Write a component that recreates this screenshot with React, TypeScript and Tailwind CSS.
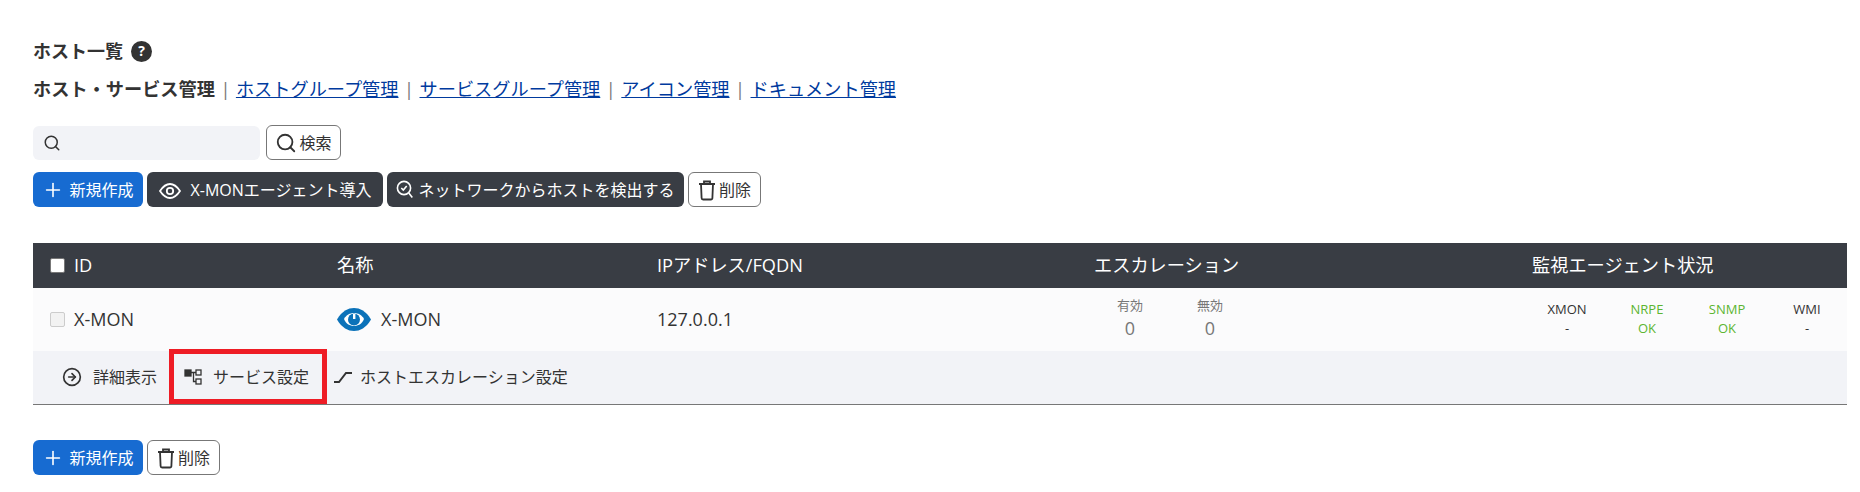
import React from 'react';
import { Search, Plus, CircleArrowRight } from 'lucide-react';

const fontStack = { fontFamily: '"Open Sans", "Noto Sans CJK JP", sans-serif' };

const links = ['ホストグループ管理', 'サービスグループ管理', 'アイコン管理', 'ドキュメント管理'];

const agents = [
  { name: 'XMON', value: '-', ok: false },
  { name: 'NRPE', value: 'OK', ok: true },
  { name: 'SNMP', value: 'OK', ok: true },
  { name: 'WMI', value: '-', ok: false },
];

const TrashIcon = () => (
  <svg width="18" height="22" viewBox="0 0 18 22" fill="none" stroke="#333" strokeWidth="1.8">
    <path d="M1 5h16M6 5V2.500h6V5M3 5l.6 14a1.500 1.500 0 0 0 1.500 1.500h7.800a1.500 1.500 0 0 0 1.500-1.500L15 5" />
  </svg>
);

const CreateButton = () => (
  <button className="h-[35px] w-[110px] rounded-md bg-[#176bd1] text-white text-base flex items-center justify-center gap-[5px]">
    <Plus size={22} strokeWidth={1.75} /> 新規作成
  </button>
);

const DeleteButton = () => (
  <button className="h-[35px] w-[73px] rounded-md border border-[#777] bg-white text-[#333] text-base flex items-center justify-center gap-[3px]">
    <TrashIcon /> 削除
  </button>
);

const AgentIcon = () => (
  <svg width="22" height="22" viewBox="0 0 22 22" fill="none" stroke="#fff" strokeWidth="1.8">
    <path d="M1 12C4 7.500 7.500 5 11 5s7 2.500 10 7c-3 4.500-6.500 7-10 7s-7-2.500-10-7Z" />
    <circle cx="11" cy="12" r="3.200" />
  </svg>
);

const DiscoverIcon = () => (
  <svg width="18" height="22" viewBox="0 0 18 22" fill="none" stroke="#fff" strokeWidth="1.6">
    <circle cx="8" cy="9" r="6.600" />
    <path d="M5.300 9l2 2 3.400-4M12.800 14l3.500 4.500" />
  </svg>
);

const ServiceIcon = () => (
  <svg width="18" height="18" viewBox="0 0 18 18" fill="none" stroke="#333" strokeWidth="1.3">
    <rect x="1" y="2" width="6" height="6" fill="#333" />
    <rect x="12" y="2" width="5" height="5" />
    <rect x="12" y="11" width="5" height="5" />
    <path d="M7 4.500h5M9.500 4.500v9H12" />
  </svg>
);

const EscalationIcon = () => (
  <svg width="20" height="14" viewBox="0 0 20 14" fill="none" stroke="#333" strokeWidth="2">
    <path d="M1 12h5L13 3h6" />
  </svg>
);

const LogoEye = () => (
  <svg width="34" height="23" viewBox="0 0 34 23">
    <path d="M0 11.500C5 3 11 0 17 0s12 3 17 11.500C29 20 23 23 17 23S5 20 0 11.500Z" fill="#0b72b9" />
    <path d="M7 11C9 7 13 5 17 5s8 2 10 6c-2 5-6 7-10 7s-8-2-10-7Z" fill="#fff" />
    <circle cx="17" cy="11.500" r="6" fill="#0b72b9" />
    <rect x="16" y="6" width="2.400" height="5" fill="#fff" />
  </svg>
);

export default function App() {
  return (
    <div className="min-h-[492px] bg-white pl-[33px] pt-[39px] text-[#333]" style={fontStack}>
      {/* Title */}
      <div className="flex h-6 items-center gap-2 text-[18px] font-semibold">
        ホスト一覧
        <span className="flex h-[21px] w-[21px] items-center justify-center rounded-full bg-[#333] text-sm font-bold text-white">?</span>
      </div>

      {/* Sub nav */}
      <div className="mt-[14px] flex h-[26px] items-center text-[18.2px]">
        <span className="font-bold">ホスト・サービス管理</span>
        {links.map((l) => (
          <React.Fragment key={l}>
            <span className="mx-[5.5px] text-[#777]">|</span>
            <a className="text-[#003a9e] underline">{l}</a>
          </React.Fragment>
        ))}
      </div>

      {/* Search */}
      <div className="mt-[22px] flex items-center gap-[6px]">
        <div className="flex h-[34px] w-[227px] items-center rounded-md bg-[#f2f3f7] pl-[10px]">
          <Search size={18} className="text-[#333]" />
        </div>
        <button className="flex h-[35px] w-[75px] items-center justify-center gap-[2px] rounded-md border border-[#777] text-base">
          <Search size={22} /> 検索
        </button>
      </div>

      {/* Actions */}
      <div className="mt-[12px] flex gap-1">
        <CreateButton />
        <button className="flex h-[35px] w-[236px] items-center justify-center gap-[10px] rounded-md bg-[#393d44] text-base text-white">
          <AgentIcon /> X-MONエージェント導入
        </button>
        <button className="flex h-[35px] w-[297px] items-center justify-center gap-1 rounded-md bg-[#393d44] text-base text-white">
          <DiscoverIcon /> ネットワークからホストを検出する
        </button>
        <DeleteButton />
      </div>

      {/* Table */}
      <div className="mt-[36px] mr-[13px]">
        <div className="grid h-[45px] grid-cols-[288px_320px_439px_436px_1fr] items-center bg-[#393d44] text-[18.2px] text-white">
          <div className="flex items-center gap-[9px] pl-[17px]">
            <span className="h-[15px] w-[15px] rounded-[2px] border border-[#777] bg-white" />
            ID
          </div>
          <div className="pl-4">名称</div>
          <div className="pl-4">IPアドレス/FQDN</div>
          <div className="pl-[14px]">エスカレーション</div>
          <div className="pl-4">監視エージェント状況</div>
        </div>

        <div className="grid h-[63px] grid-cols-[288px_320px_439px_436px_1fr] items-center bg-[#fbfbfc] text-[18px]">
          <div className="flex items-center gap-[9px] pl-[17px]">
            <span className="h-[15px] w-[15px] rounded-[2px] border border-[#ccc] bg-[#f2f2f2]" />
            X-MON
          </div>
          <div className="flex items-center gap-[10px] pl-4">
            <LogoEye /> X-MON
          </div>
          <div className="pl-4">127.0.0.1</div>
          <div className="-mt-[3px] flex pl-[10px] text-[#777]">
            <div className="w-20 text-center">
              <div className="text-[13px]">有効</div>
              <div className="text-lg leading-6">0</div>
            </div>
            <div className="w-20 text-center">
              <div className="text-[13px]">無効</div>
              <div className="text-lg leading-6">0</div>
            </div>
          </div>
          <div className="-mt-[1px] flex pl-[11px] text-[13px]">
            {agents.map((a) => (
              <div key={a.name} className={`w-20 text-center ${a.ok ? 'text-[#5cb531]' : 'text-[#333]'}`}>
                <div>{a.name}</div>
                <div>{a.value}</div>
              </div>
            ))}
          </div>
        </div>

        <div className="flex h-[54px] items-center border-b border-[#777] bg-[#f2f3f7] pl-[29px] text-base">
          <div className="flex items-center gap-[11px] pb-[2px]">
            <CircleArrowRight size={20} /> 詳細表示
          </div>
          <div className="relative ml-[12px] flex h-full w-[158px] items-center gap-[11px] pb-[2px] pl-[15px]">
            <div className="absolute inset-x-0 -top-[2px] bottom-0 border-[5px] border-[#ee1c25]" />
            <ServiceIcon /> サービス設定
          </div>
          <div className="ml-[6px] flex items-center gap-[7px] pb-[2px]">
            <EscalationIcon /> ホストエスカレーション設定
          </div>
        </div>
      </div>

      {/* Footer actions */}
      <div className="mt-[35px] flex gap-1">
        <CreateButton />
        <DeleteButton />
      </div>
    </div>
  );
}
